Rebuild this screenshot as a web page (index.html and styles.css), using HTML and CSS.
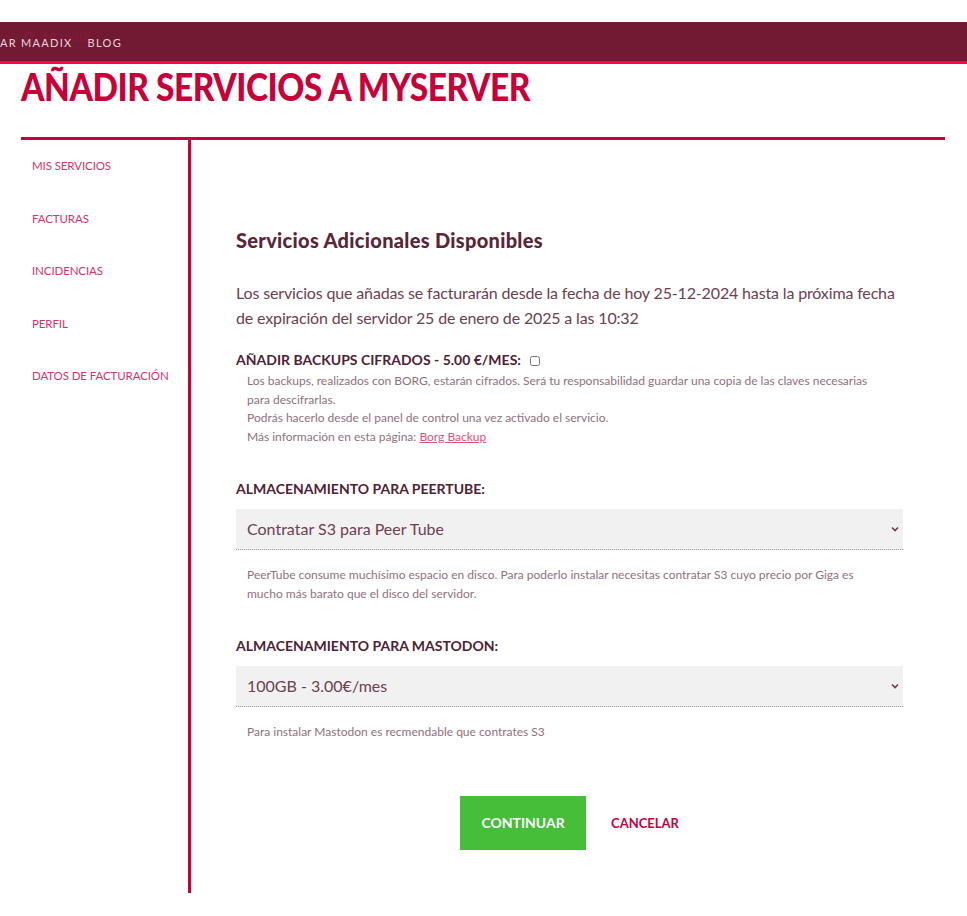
FILE: index.html
```html
<!DOCTYPE html>
<html>

<head>
    <title>Añadir servicios - MaadiX</title>
    <link rel="stylesheet" href="styles.css">
</head>

<body>
    <div class="topbar">
        <a class="topbar-logo" href="#"><span class="topbar-logo-icon"></span>MaadiX</a>
        <ul class="topbar-menu">
            <li><a href="#">AR MAADIX</a></li>
            <li><a href="#">BLOG</a></li>
        </ul>
    </div>

    <h1 class="page-title">AÑADIR SERVICIOS A MYSERVER</h1>

    <div class="main">
        <ul class="main-sidebar">
            <li><a href="#">MIS SERVICIOS</a></li>
            <li><a href="#">FACTURAS</a></li>
            <li><a href="#">INCIDENCIAS</a></li>
            <li><a href="#">PERFIL</a></li>
            <li><a href="#">DATOS DE FACTURACIÓN</a></li>
        </ul>

        <div class="main-content">
            <h3 class="main-content-title">Servicios Adicionales Disponibles</h3>
            <p class="main-content-intro">Los servicios que añadas se facturarán desde la fecha de hoy 25-12-2024 hasta la próxima fecha de expiración del servidor 25 de enero de 2025 a las 10:32</p>

            <form class="services-form" action="">
                <div class="services-form-field">
                    <label class="services-form-label" for="backups">AÑADIR BACKUPS CIFRADOS - 5.00 €/MES: <input type="checkbox" id="backups" class="services-form-check"></label>
                    <div class="services-form-help">
                        Los backups, realizados con BORG, estarán cifrados. Será tu responsabilidad guardar una copia de las claves necesarias para descifrarlas.<br>
                        Podrás hacerlo desde el panel de control una vez activado el servicio.<br>
                        Más información en esta página: <a href="#">Borg Backup</a>
                    </div>
                </div>

                <div class="services-form-field">
                    <label class="services-form-label" for="peertube">ALMACENAMIENTO PARA PEERTUBE:</label>
                    <div class="services-form-select">
                        <select id="peertube">
                            <option>Contratar S3 para Peer Tube</option>
                        </select>
                        <svg class="services-form-arrow" width="8" height="6" viewBox="0 0 8 6"><path d="M1 1.5l3 3 3-3" fill="none" stroke="#6d3a4a" stroke-width="1.6"/></svg>
                    </div>
                    <div class="services-form-help services-form-help-spaced">
                        PeerTube consume muchísimo espacio en disco. Para poderlo instalar necesitas contratar S3 cuyo precio por Giga es mucho más barato que el disco del servidor.
                    </div>
                </div>

                <div class="services-form-field">
                    <label class="services-form-label" for="mastodon">ALMACENAMIENTO PARA MASTODON:</label>
                    <div class="services-form-select">
                        <select id="mastodon">
                            <option>100GB - 3.00€/mes</option>
                        </select>
                        <svg class="services-form-arrow" width="8" height="6" viewBox="0 0 8 6"><path d="M1 1.5l3 3 3-3" fill="none" stroke="#6d3a4a" stroke-width="1.6"/></svg>
                    </div>
                    <div class="services-form-help services-form-help-spaced">
                        Para instalar Mastodon es recmendable que contrates S3
                    </div>
                </div>

                <div class="services-form-actions">
                    <button class="services-form-submit">CONTINUAR</button>
                    <a class="services-form-cancel" href="#">CANCELAR</a>
                </div>
            </form>
        </div>
    </div>
</body>

</html>
```

FILE: styles.css
```css
body {
    margin: 0;
    padding-top: 22px;
    font-family: Lato, "Open Sans", sans-serif;
    color: #6d4050;
    background: #fff;
}

a {
    text-decoration: none;
}

/* top bar */

.topbar {
    position: relative;
    height: 39px;
    background: #721a33;
    border-bottom: 3px solid #fb0844;
}

.topbar-logo {
    position: absolute;
    left: 24px;
    top: 5px;
    font-size: 15px;
    color: #82193a;
}

.topbar-logo-icon {
    display: inline-block;
    width: 6px;
    height: 6px;
    margin-right: 8px;
    border: 2px solid #82193a;
    border-radius: 50%;
}

.topbar-menu {
    position: relative;
    list-style: none;
    margin: 0;
    padding: 0 0 3px;
    display: flex;
    gap: 15px;
    height: 36px;
    align-items: center;
}

.topbar-menu a {
    font-size: 11px;
    letter-spacing: 1.3px;
    color: #ecd3dc;
}

.page-title {
    margin: 0 0 0 21px;
    font-size: 38px;
    line-height: 44px;
    font-weight: 900;
    letter-spacing: -0.5px;
    color: #c8003a;
    transform: scaleX(0.88);
    transform-origin: left center;
}

/* sidebar + content */

.main {
    display: flex;
    margin: 29px 22px 24px 21px;
    border-top: 3px solid #c5003c;
}

.main-sidebar {
    list-style: none;
    margin: 0;
    padding: 14px 0 0 11px;
    width: 156px;
    border-right: 3px solid #c5003c;
}

.main-sidebar li {
    height: 52.5px;
}

.main-sidebar a {
    font-size: 11.5px;
    letter-spacing: -0.1px;
    color: #d2336a;
}

.main-content {
    flex: 1;
    padding: 88px 42px 43px 45px;
}

.main-content-title {
    margin: 0;
    font-size: 20px;
    font-weight: 900;
    letter-spacing: 0.3px;
    color: #5a2537;
}

.main-content-intro {
    margin: 28px 0 21px;
    font-size: 16px;
    line-height: 25px;
    letter-spacing: -0.15px;
}

.services-form-field {
    margin-bottom: 34px;
}

.services-form-label {
    display: block;
    font-size: 14px;
    font-weight: bold;
    color: #4f2233;
    margin-bottom: 4px;
}

.services-form-check {
    width: 10px;
    height: 10px;
    margin: 0 0 0 6px;
    vertical-align: -1px;
}

.services-form-help {
    padding: 0 30px 0 11px;
    font-size: 12px;
    line-height: 18.5px;
    color: #8f7080;
}

.services-form-help a {
    color: #e0507a;
    text-decoration: underline;
}

.services-form-help-spaced {
    margin-top: 16px;
}

.services-form-select {
    position: relative;
    margin-top: 12px;
}

.services-form-select select {
    display: block;
    width: 100%;
    height: 41px;
    padding: 0 11px 2px;
    font-family: inherit;
    font-size: 16px;
    color: #6d4050;
    background: #f1f1f1;
    border: 0;
    border-bottom: 1px dotted #9a9a9a;
    border-radius: 0;
    appearance: none;
}

.services-form-arrow {
    position: absolute;
    right: 4px;
    top: 17px;
    pointer-events: none;
}

.services-form-actions {
    display: flex;
    justify-content: center;
    align-items: center;
    gap: 25px;
    margin-top: 54px;
}

.services-form-submit {
    width: 126px;
    height: 54px;
    border: 0;
    background: #46be3a;
    color: #fff;
    font-family: inherit;
    font-size: 14px;
    font-weight: bold;
}

.services-form-cancel {
    font-size: 13px;
    font-weight: bold;
    color: #c8003a;
}
```
